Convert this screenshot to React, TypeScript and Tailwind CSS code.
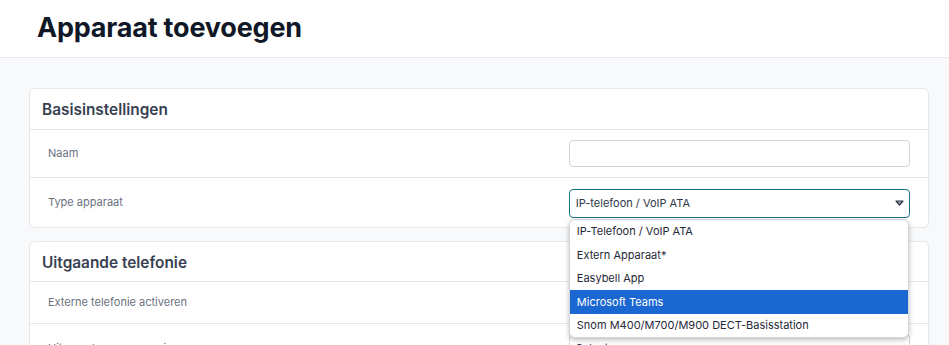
import React from "react";

const options = [
    "IP-Telefoon / VoIP ATA",
    "Extern Apparaat*",
    "Easybell App",
    "Microsoft Teams",
    "Snom M400/M700/M900 DECT-Basisstation",
];

const Arrow: React.FC = () => (
    <svg width="9" height="6" viewBox="0 0 9 6" className="shrink-0">
        <path d="M1 1 L8 1 L4.5 5 Z" fill="#9ca3af" stroke="#2d3748" strokeWidth="1.2" strokeLinejoin="round" />
    </svg>
);

const App: React.FC = () => {
    return (
        <div className="h-screen overflow-hidden bg-[#f8f9fb] font-['Inter',sans-serif]">
            {/* Page header */}
            <header className="h-[58px] bg-white border-b border-[#e5e7eb] px-[37px] flex items-center">
                <h1 className="text-[27px] font-bold text-[#111827] tracking-[-0.2px]">Apparaat toevoegen</h1>
            </header>

            <main className="pl-[29px] pr-[20px] pt-[30px] flex flex-col gap-[13px]">
                {/* Basisinstellingen */}
                <section className="bg-white border border-[#e5e7eb] rounded-md">
                    <div className="h-[41px] px-3 flex items-center border-b border-[#e5e7eb]">
                        <h2 className="text-[15.4px] font-semibold text-[#374151] pt-[2px]">Basisinstellingen</h2>
                    </div>
                    <div className="grid grid-cols-[60%_40%] h-[48px] items-center border-b border-[#e5e7eb]">
                        <label className="pl-[18px] text-[11px] text-[#6b7280]">Naam</label>
                        <div className="pr-[18px]">
                            <input
                                type="text"
                                className="block w-full h-[27px] border border-[#d1d5db] rounded-[4px] bg-white"
                            />
                        </div>
                    </div>
                    <div className="grid grid-cols-[60%_40%] h-[49px] items-center">
                        <label className="pl-[18px] text-[11px] text-[#6b7280]">Type apparaat</label>
                        <div className="pr-[18px] relative pt-[1px]">
                            <div className="h-[29px] border border-[#1b7389] rounded-[4px] bg-white flex items-center justify-between pl-[6px] pr-[5px]">
                                <span className="text-[11px] text-[#2d3748]">IP-telefoon / VoIP ATA</span>
                                <Arrow />
                            </div>
                            {/* Open dropdown list */}
                            <ul className="absolute left-0 right-[19px] top-[31px] z-10 bg-white rounded-md border border-[#d1d5db] shadow-[0_2px_5px_rgba(0,0,0,0.25)] overflow-hidden">
                                {options.map((opt) => (
                                    <li
                                        key={opt}
                                        className={
                                            opt === "Microsoft Teams"
                                                ? "h-[23.6px] flex items-center pl-[7px] text-[11px] bg-[#1a67d2] text-white"
                                                : "h-[23.6px] flex items-center pl-[7px] text-[11px] text-[#1f2937]"
                                        }
                                    >
                                        {opt}
                                    </li>
                                ))}
                            </ul>
                        </div>
                    </div>
                </section>

                {/* Uitgaande telefonie */}
                <section className="bg-white border border-[#e5e7eb] rounded-md">
                    <div className="h-[40px] px-3 flex items-center border-b border-[#e5e7eb]">
                        <h2 className="text-[15.4px] font-semibold text-[#374151] pt-[2px]">Uitgaande telefonie</h2>
                    </div>
                    <div className="grid grid-cols-[60%_40%] h-[42px] items-center border-b border-[#e5e7eb]">
                        <label className="pl-[18px] text-[11px] text-[#6b7280]">Externe telefonie activeren</label>
                        <div className="pr-[18px]" />
                    </div>
                    <div className="grid grid-cols-[60%_40%] h-[48px] items-center">
                        <label className="pl-[18px] text-[11px] text-[#6b7280]">Uitgaande oproepen via</label>
                        <div className="pr-[18px]">
                            <div className="h-[28px] border border-[#d1d5db] rounded-[4px] bg-white flex items-center justify-between pl-[6px] pr-[5px]">
                                <span className="text-[11px] text-[#2d3748]">Selecteer</span>
                                <Arrow />
                            </div>
                        </div>
                    </div>
                </section>
            </main>
        </div>
    );
};

export default App;
